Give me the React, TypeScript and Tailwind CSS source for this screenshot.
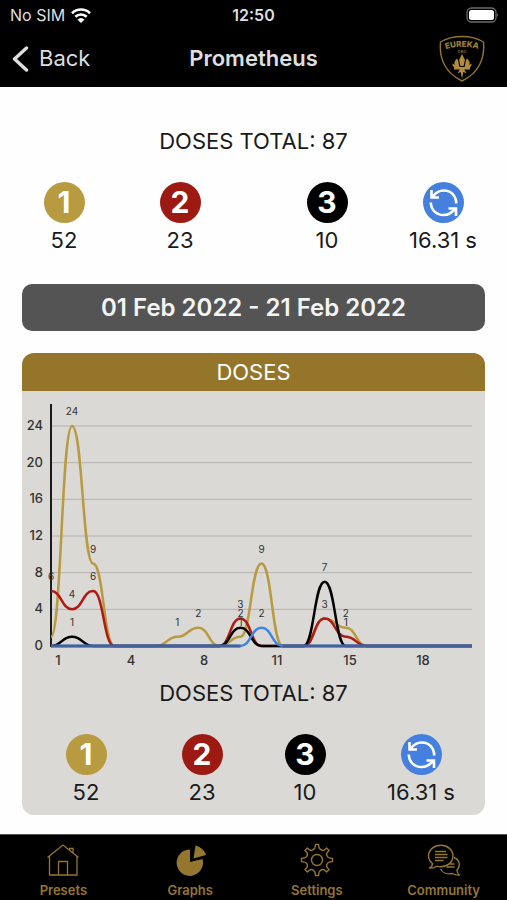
import { ReactNode } from "react"

type Serie = {
  name: string;
  color: string;
  values: number[];
}

const series: Serie[] = [
  { name: "1", color: "#b89a40", values: [1, 24, 9, 0, 0, 0, 1, 2, 0, 1, 9, 0, 0, 3, 2, 0, 0, 0, 0, 0, 0] },
  { name: "2", color: "#b01a14", values: [6, 4, 6, 0, 0, 0, 0, 0, 0, 3, 0, 0, 0, 3, 1, 0, 0, 0, 0, 0, 0] },
  { name: "3", color: "#000000", values: [0, 1, 0, 0, 0, 0, 0, 0, 0, 2, 0, 0, 0, 7, 0, 0, 0, 0, 0, 0, 0] },
  { name: "purge", color: "#3f85e6", values: [0, 0, 0, 0, 0, 0, 0, 0, 0, 0, 2, 0, 0, 0, 0, 0, 0, 0, 0, 0, 0] },
]

const yTicks = [0, 4, 8, 12, 16, 20, 24]
const xTicks = [1, 4, 8, 11, 15, 18]

// chart area inside the 463x285 viewBox
const left = 29
const right = 450
const bottom = 255
const stepX = (right - left) / 20
const stepY = 220 / 24

const px = (i: number) => left + i * stepX
const py = (v: number) => bottom - v * stepY

// the first day sits on the axis, so only its highest value gets a label;
// equal values on the same day share one
const labels = xyLabels()

function xyLabels() {
  const result: { day: number; value: number }[] = []
  for (let day = 0; day <= 20; day++) {
    const values = [...new Set(series.map(serie => serie.values[day]))].filter(v => v > 0)
    const visible = day === 0 ? [Math.max(...values)] : values
    visible.forEach(value => result.push({ day, value }))
  }
  return result
}

function curve(values: number[]) {
  return values.map((v, i) => {
    if (i === 0) return `M${px(0)},${py(v)}`
    const mid = (px(i - 1) + px(i)) / 2
    return `C${mid},${py(values[i - 1])} ${mid},${py(v)} ${px(i)},${py(v)}`
  }).join(" ")
}

function DosesChart() {
  return (
    <svg viewBox="0 0 463 285" className="block w-full" role="img" aria-label="Doses per day">
      {yTicks.map(tick => (
        <g key={tick}>
          {tick > 0 && <line x1={left} x2={right} y1={py(tick)} y2={py(tick)} stroke="#b2b2af" strokeWidth="1" />}
          <text x="21" y={py(tick) + 4} textAnchor="end" fontSize="13" fontWeight="500" fill="#333">{tick}</text>
        </g>
      ))}
      <line x1={left} x2={left} y1="13" y2={bottom + 1} stroke="#1c1c1c" strokeWidth="2" />
      {series.map(serie => (
        <path key={serie.name} d={curve(serie.values)} fill="none" stroke={serie.color} strokeWidth="2.5" />
      ))}
      {/* zero line, open where the purge curve rises */}
      <path d={`M${left},${bottom}H${px(9)}M${px(11)},${bottom}H${right}`} stroke="#41629c" strokeWidth="3" />
      {labels.map(({ day, value }) => (
        <text key={`${day}-${value}`} x={px(day)} y={py(value) - 11} textAnchor="middle" fontSize="10" fill="#333">{value}</text>
      ))}
      {xTicks.map((tick, i) => (
        <text key={tick} x={36 + i * 73} y="274" textAnchor="middle" fontSize="13" fontWeight="500" fill="#333">{tick}</text>
      ))}
    </svg>
  )
}

function PurgeIcon() {
  return (
    <svg viewBox="0 0 41 41" className="size-[41px]" fill="none" stroke="#fff" strokeWidth="2.6" aria-hidden="true">
      <path d="M9.500 15C12.500 10.500 16.500 8.500 21 8.500C28 8.500 33.200 14 33.200 21.500" />
      <path d="M8.500 8V15.500H16" />
      <path d="M7.800 20.500C8 28 13.500 33 20.500 33C25 33 29 31 32 26.500" />
      <path d="M25.500 26.500H33V34" />
      <path d="M8 11L12.500 15.500H8ZM29 26.500H33V31Z" fill="#fff" stroke="none" />
    </svg>
  )
}

function Stat({ color, icon, value }: { color: string; icon: ReactNode; value: string }) {
  return (
    <div className="flex w-[70px] flex-col items-center">
      <div className={`flex size-[41px] items-center justify-center rounded-full text-[30px] font-bold text-white ${color}`}>
        {icon}
      </div>
      <span className="whitespace-nowrap text-[22px] leading-[34px]">{value}</span>
    </div>
  )
}

function DosesSummary() {
  return (
    <div className="text-[#1a1a1a]">
      <p className="text-center text-[22px] leading-[34px]">DOSES TOTAL: 87</p>
      <div className="mt-6 flex justify-between px-[29px]">
        <div className="flex gap-[46px]">
          <Stat color="bg-[#b89a40]" icon="1" value="52" />
          <Stat color="bg-[#9c1a12]" icon="2" value="23" />
        </div>
        <div className="flex gap-[46px]">
          <Stat color="bg-black" icon="3" value="10" />
          <Stat color="bg-[#4580de]" icon={<PurgeIcon />} value="16.31 s" />
        </div>
      </div>
    </div>
  )
}

function Logo() {
  return (
    <svg viewBox="0 0 46 48" className="h-12 w-[46px]" fill="none" stroke="#94762f" aria-label="Eureka" role="img">
      <path strokeWidth="1.4" d="M23 1.500C31 1.500 38 3 44.500 7C46 23 40 38 23 46C6 38 0 23 1.500 7C8 3 15 1.500 23 1.500Z" />
      <path id="arc" stroke="none" d="M5 14.500Q23 9 41 14.500" />
      <text fontSize="8" fontWeight="800" fill="#a08034" stroke="none" textAnchor="middle">
        <textPath href="#arc" startOffset="50%">EUREKA</textPath>
      </text>
      <text x="23" y="18" fontSize="4" fontWeight="700" fill="#7d652a" stroke="none" textAnchor="middle">ORO</text>
      <g fill="#b08c3c" stroke="none">
        <path d="M23 19L26 25L24.500 31H21.500L20 25Z" />
        <path d="M21.500 33C19 31 20.500 27 18 23.500C15.500 26 14.500 28 16 30L13.500 28.500C13 31.500 16 34 21.500 34Z" />
        <path d="M24.500 33C27 31 25.500 27 28 23.500C30.500 26 31.500 28 30 30L32.500 28.500C33 31.500 30 34 24.500 34Z" />
        <path d="M15 32H31V34.500H15Z" />
        <path d="M21 34H25L27.500 38.500L24.300 37L23 44L21.700 37L18.500 38.500Z" />
      </g>
    </svg>
  )
}

function HomeIcon() {
  return (
    <svg viewBox="0 0 34 34" className="size-[34px]" fill="none" stroke="currentColor" strokeWidth="1.300" aria-hidden="true">
      <path d="M1.500 14.500L17 2L32.500 14.500" />
      <path d="M3.500 13V32H31V13" />
      <path d="M12.500 32V18.500H21.500V32" />
      <path d="M23.500 7V5.500H27V10" />
    </svg>
  )
}

function PieIcon() {
  return (
    <svg viewBox="0 0 34 34" className="size-[34px]" fill="currentColor" aria-hidden="true">
      <path d="M17 6.500V19L29.500 16A13.200 13.200 0 1 1 17 6.500Z" />
      <path d="M20.500 15.500L22.500 2.500C27 3.500 31.500 7 33 12Z" />
    </svg>
  )
}

function GearIcon() {
  return (
    <svg viewBox="0 0 34 34" className="size-[34px]" fill="none" stroke="currentColor" strokeWidth="1.400" strokeLinejoin="round" aria-hidden="true">
      <circle cx="17" cy="17" r="5.500" />
      {[0, 90, 180, 270].map(angle => (
        <path
          key={angle}
          transform={`rotate(${angle} 17 17)`}
          d="M15 4.600L15.400 1.500H18.600L19 4.600Q21.100 8.650 24.600 6.900L26.600 4.900L29.100 7.400L27.100 9.400Q25.350 12.900 29.400 15"
        />
      ))}
    </svg>
  )
}

function ChatIcon() {
  return (
    <svg viewBox="0 0 34 34" className="size-[34px]" fill="none" stroke="currentColor" strokeWidth="1.400" strokeLinejoin="round" aria-hidden="true">
      <path d="M5.500 20.500C2.500 18 1.500 15.500 1.500 13C1.500 7 7 2.200 13.800 2.200C20.500 2.200 26 7 26 13C26 19 20.500 23.800 13.800 23.800C12.500 23.800 11 23.600 9.800 23.200C7.500 25 5 25.300 2.500 25C4.500 24 5.500 22.500 5.500 20.500Z" />
      <path d="M8 8.500H19M8 11.500H20.500M8 14.500H20.500M8 17.500H16.500" />
      <path d="M27 14.500C32.500 16.500 34 22.500 30 27C30 29.500 31 31 32.500 32C29.500 32.500 27 31.500 25.500 30.500C20.500 31.500 15.500 30 13.500 26" />
      <path d="M22.500 21H27.500M19.500 24H27.500" />
    </svg>
  )
}

const tabs = [
  { label: "Presets", icon: <HomeIcon /> },
  { label: "Graphs", icon: <PieIcon /> },
  { label: "Settings", icon: <GearIcon /> },
  { label: "Community", icon: <ChatIcon /> },
]

function App() {
  return (
    <div className="flex min-h-screen flex-col bg-[#fefefe] font-['Inter','Liberation_Sans',sans-serif]">
      <header className="bg-black text-[#dedede]">
        <div className="grid h-[30px] grid-cols-3 items-center px-2 text-base">
          <div className="flex items-center gap-[6px] pl-[2px]">
            <span>No SIM</span>
            <svg viewBox="0 0 20 15" className="h-[15px] w-5" fill="none" stroke="#fff" strokeWidth="2.600" aria-hidden="true">
              <path d="M1 5.200C6 .3 14 .3 19 5.200" />
              <path d="M4.300 8.700C7.500 5.700 12.500 5.700 15.700 8.700" />
              <path fill="#fff" stroke="none" d="M6.500 11.500Q10 8.500 13.500 11.500L10 15Z" />
            </svg>
          </div>
          <span className="text-center font-semibold">12:50</span>
          <svg viewBox="0 0 33 17" className="h-[17px] w-[33px] justify-self-end" aria-hidden="true">
            <rect x="1" y="1" width="29" height="14" rx="4.500" fill="none" stroke="#6a6a6a" strokeWidth="1.300" />
            <rect x="3" y="3" width="25" height="10" rx="2.500" fill="#fff" />
            <path d="M31 6Q33 8 31 10Z" fill="#6a6a6a" />
          </svg>
        </div>
        <div className="grid h-[57px] grid-cols-3 items-center pr-[22px] pl-3">
          <button type="button" className="flex items-center gap-[10px] text-[22px]">
            <svg viewBox="0 0 17 26" className="h-[26px] w-[17px]" fill="none" stroke="currentColor" strokeWidth="3.400" strokeLinecap="round" strokeLinejoin="round" aria-hidden="true">
              <path d="M14.500 2L2.500 13L14.500 24" />
            </svg>
            Back
          </button>
          <h1 className="pl-[10px] text-center text-[22px] font-semibold">Prometheus</h1>
          <div className="justify-self-end">
            <Logo />
          </div>
        </div>
      </header>

      <main className="flex-1 px-[22px] pt-[37px] pb-[19px]">
        <div className="-mx-[22px]">
          <DosesSummary />
        </div>

        <button type="button" className="mt-[27px] h-[47px] w-full rounded-[10px] bg-[#545454] text-2xl font-semibold text-[#f4f4f4]">
          01 Feb 2022 - 21 Feb 2022
        </button>

        <section className="mt-[22px] overflow-hidden rounded-xl bg-[#dad9d5] pb-[6px]">
          <h2 className="bg-[#95752a] text-center text-[22px] leading-[38px] text-white">DOSES</h2>
          <DosesChart />
          <DosesSummary />
        </section>
      </main>

      <nav className="grid h-[66px] grid-cols-4 border-t border-[#555] bg-black pt-2 text-[#94762f]">
        {tabs.map(tab => (
          <a key={tab.label} href="#" className="flex flex-col items-center gap-[5px] text-[13px] leading-4 font-semibold">
            {tab.icon}
            {tab.label}
          </a>
        ))}
      </nav>
    </div>
  )
}

export default App
